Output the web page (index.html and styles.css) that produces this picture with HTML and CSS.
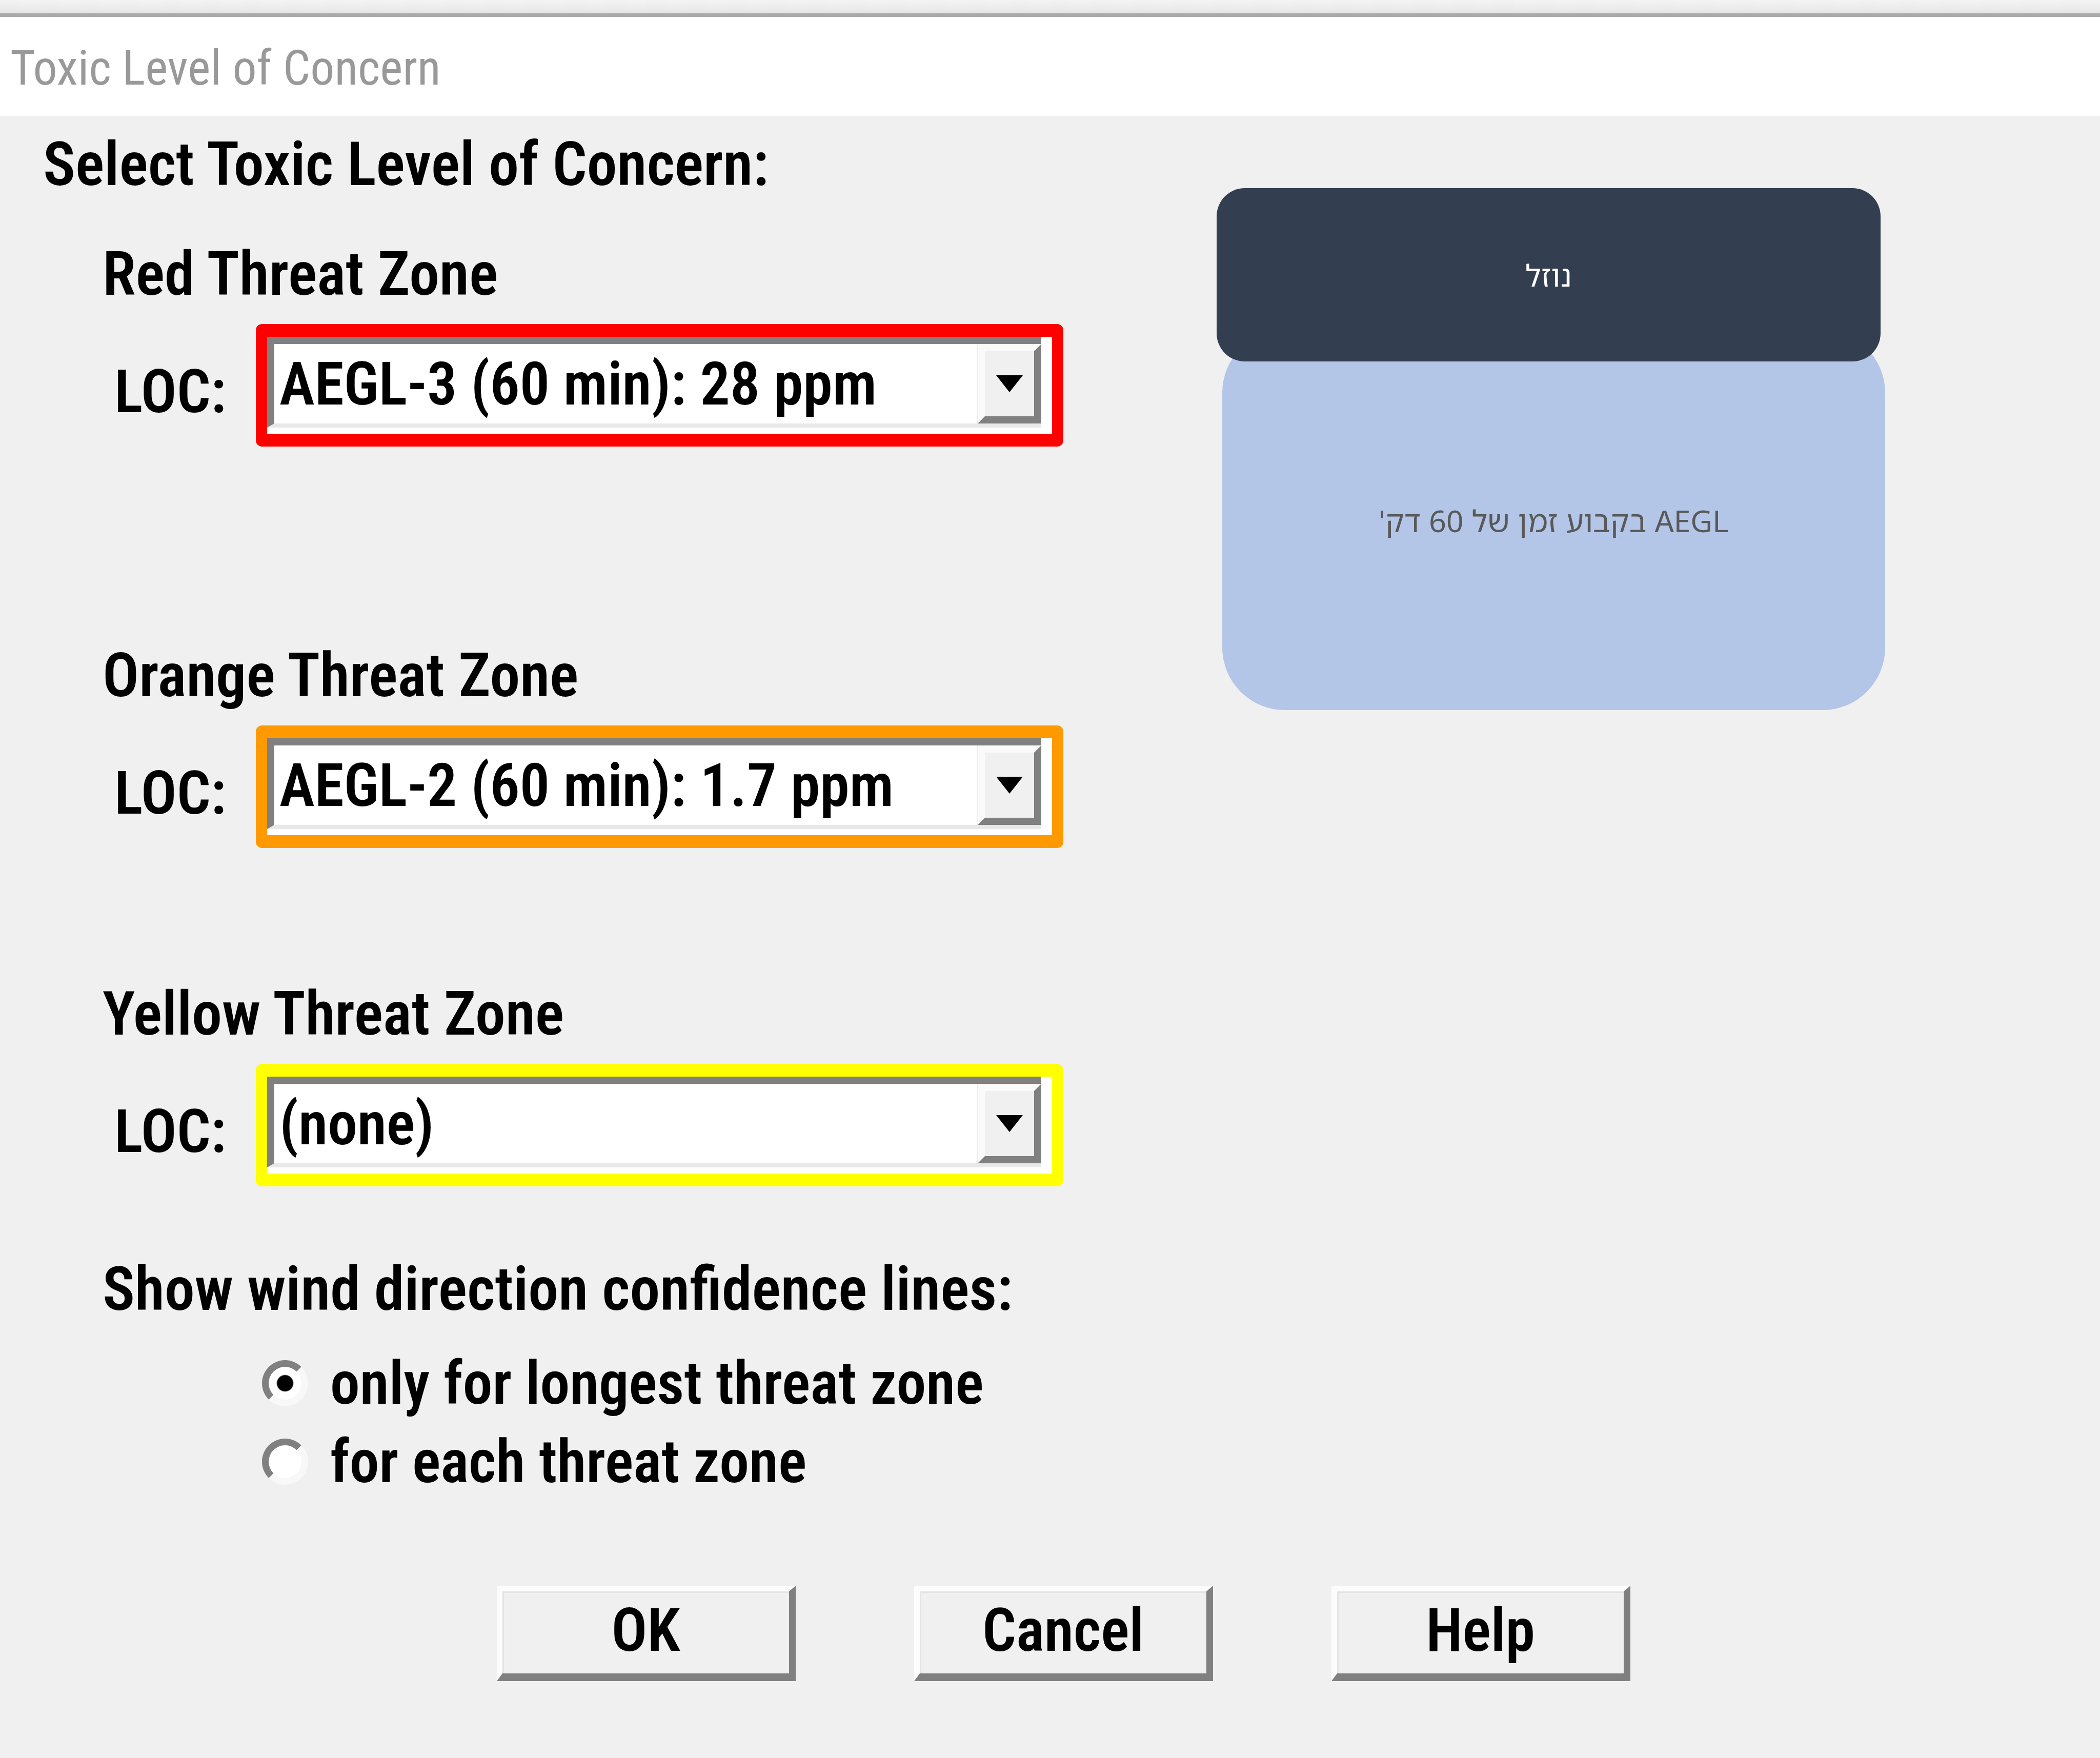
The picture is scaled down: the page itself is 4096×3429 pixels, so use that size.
FILE: index.html
```html
<!DOCTYPE html>
<html lang="en">
<head>
<meta charset="utf-8">
<title>Toxic Level of Concern</title>
<link rel="stylesheet" href="styles.css">
</head>
<body>
<div class="window-edge"></div>
<header class="titlebar"><h1 class="titlebar-text">Toxic Level of Concern</h1></header>
<form class="dialog">
  <div class="content">
    <div class="settings">
      <h2 class="heading">Select Toxic Level of Concern:</h2>

      <section class="zone zone-red">
        <h3 class="zone-title">Red Threat Zone</h3>
        <div class="zone-row">
          <label class="zone-label" for="red-loc">LOC:</label>
          <div class="combo">
            <div class="combo-field">
              <select class="combo-select" id="red-loc"><option>AEGL-3 (60 min): 28 ppm</option></select>
              <span class="combo-arrow"><svg class="arrow-icon" viewBox="0 0 52 33"><path d="M0 0H52L26 33Z"/></svg></span>
            </div>
          </div>
        </div>
      </section>

      <section class="zone zone-orange">
        <h3 class="zone-title">Orange Threat Zone</h3>
        <div class="zone-row">
          <label class="zone-label" for="orange-loc">LOC:</label>
          <div class="combo">
            <div class="combo-field">
              <select class="combo-select" id="orange-loc"><option>AEGL-2 (60 min): 1.7 ppm</option></select>
              <span class="combo-arrow"><svg class="arrow-icon" viewBox="0 0 52 33"><path d="M0 0H52L26 33Z"/></svg></span>
            </div>
          </div>
        </div>
      </section>

      <section class="zone zone-yellow">
        <h3 class="zone-title">Yellow Threat Zone</h3>
        <div class="zone-row">
          <label class="zone-label" for="yellow-loc">LOC:</label>
          <div class="combo">
            <div class="combo-field">
              <select class="combo-select" id="yellow-loc"><option>(none)</option></select>
              <span class="combo-arrow"><svg class="arrow-icon" viewBox="0 0 52 33"><path d="M0 0H52L26 33Z"/></svg></span>
            </div>
          </div>
        </div>
      </section>

      <fieldset class="lines">
        <legend class="zone-title">Show wind direction confidence lines:</legend>
        <div class="options">
          <label class="option"><input class="radio" type="radio" name="lines" checked>only for longest threat zone</label>
          <label class="option"><input class="radio" type="radio" name="lines">for each threat zone</label>
        </div>
      </fieldset>
    </div>

    <aside class="note" lang="he" dir="rtl">
      <div class="note-title">נוזל</div>
      <div class="note-body">AEGL בקבוע זמן של 60 דק'</div>
    </aside>
  </div>

  <footer class="actions">
    <button class="button" type="button">OK</button>
    <button class="button" type="button">Cancel</button>
    <button class="button" type="button">Help</button>
  </footer>
</form>
</body>
</html>
```
FILE: styles.css
```css
* {
  box-sizing: border-box;
}

body {
  margin: 0;
  min-height: 100vh;
  background: #f0f0f0;
  color: #000;
  font: 600 116px/136px "Roboto Condensed", Roboto, "Liberation Sans", sans-serif;
}

/* Window frame */
.window-edge {
  height: 33px;
  border-bottom: 7px solid #aaa;
  background: linear-gradient(#f4f4f4, #e5e5e5);
}

.titlebar {
  height: 193px;
  padding: 45px 20px 0;
  background: #fff;
}

.titlebar-text {
  margin: 0;
  color: #999;
  font-size: 94px;
  font-weight: 400;
  line-height: 110px;
}

.dialog {
  padding: 27px 0 150px;
}

.content {
  display: grid;
  grid-template-columns: 2373fr 1304fr 419fr;
  align-items: start;
}

.heading,
.zone-title {
  margin: 0;
  padding: 0;
  font-size: 118px;
  font-weight: 600;
  line-height: 136px;
}

.heading {
  padding-left: 84px;
}

/* Threat zones */
.zone,
.lines {
  margin: 0;
  padding: 0 0 0 200px;
  border: 0;
}

.zone-red {
  --zone: #f00;
  margin-top: 78px;
}

.zone-orange {
  --zone: #ff9900;
  margin-top: 379px;
}

.zone-yellow {
  --zone: #ff0;
  margin-top: 256px;
}

.zone-row {
  display: flex;
  align-items: flex-start;
  margin-top: 29px;
  padding-left: 23px;
}

.zone-label {
  width: 276px;
  padding-top: 64px;
}

.combo {
  width: 1575px;
  padding: 0 21px 12px 0;
  border: 25px solid var(--zone);
  border-width: 25px 22px;
  border-radius: 12px;
  background: #fff;
}

.combo-field {
  position: relative;
}

.combo-select {
  display: block;
  width: 100%;
  height: 177px;
  padding: 0 124px 0 10px;
  border: 0 solid #808080;
  border-width: 14px 0 8px 14px;
  border-bottom-color: #e8e8e8;
  border-radius: 0;
  appearance: none;
  background: #fff;
  color: #000;
  font: inherit;
}

.combo-arrow {
  position: absolute;
  top: 14px;
  right: 0;
  display: flex;
  align-items: center;
  justify-content: center;
  width: 124px;
  height: 155px;
  border: 14px solid #808080;
  border-top-color: #fafafa;
  border-left-color: #fafafa;
  background: #f0f0f0;
  box-shadow: -2px 0 #ececec;
  pointer-events: none;
}

.arrow-icon {
  flex: none;
  width: 52px;
  height: 33px;
}

/* Confidence lines */
.lines {
  margin-top: 133px;
}

.options {
  display: flex;
  flex-direction: column;
  gap: 17px;
  margin-top: 47px;
  padding-left: 311px;
}

.option {
  display: flex;
  align-items: center;
  gap: 43px;
}

.radio {
  width: 90px;
  height: 90px;
  margin: 0;
  border: 13px solid #808080;
  border-right-color: #f8f8f8;
  border-bottom-color: #f8f8f8;
  border-radius: 50%;
  appearance: none;
  background: #fff;
}

.radio:checked {
  background: radial-gradient(circle, #000 15px, #fff 17px);
}

/* Annotation */
.note {
  margin-top: 114px;
  font: 400 59px/80px "Noto Sans Hebrew", "Open Sans", sans-serif;
}

.note-title,
.note-body {
  display: flex;
  align-items: center;
  justify-content: center;
}

.note-title {
  position: relative;
  z-index: 1;
  height: 338px;
  margin-right: 9px;
  border-radius: 55px;
  background: #333e50;
  color: #fff;
}

.note-body {
  height: 741px;
  margin: -61px 0 0 11px;
  border-radius: 122px;
  background: #b4c6e7;
  color: #595959;
}

/* Buttons */
.actions {
  display: flex;
  gap: 231px;
  margin-top: 174px;
  padding-left: 969px;
}

.button {
  width: 583px;
  height: 186px;
  padding: 0 0 8px;
  border: 14px solid #808080;
  border-width: 11px 13px 15px 11px;
  border-top-color: #fcfcfc;
  border-left-color: #fcfcfc;
  border-radius: 0;
  background: #f0f0f0;
  box-shadow: inset 3px 3px #e4e4e4;
  color: #000;
  font: inherit;
}
```
